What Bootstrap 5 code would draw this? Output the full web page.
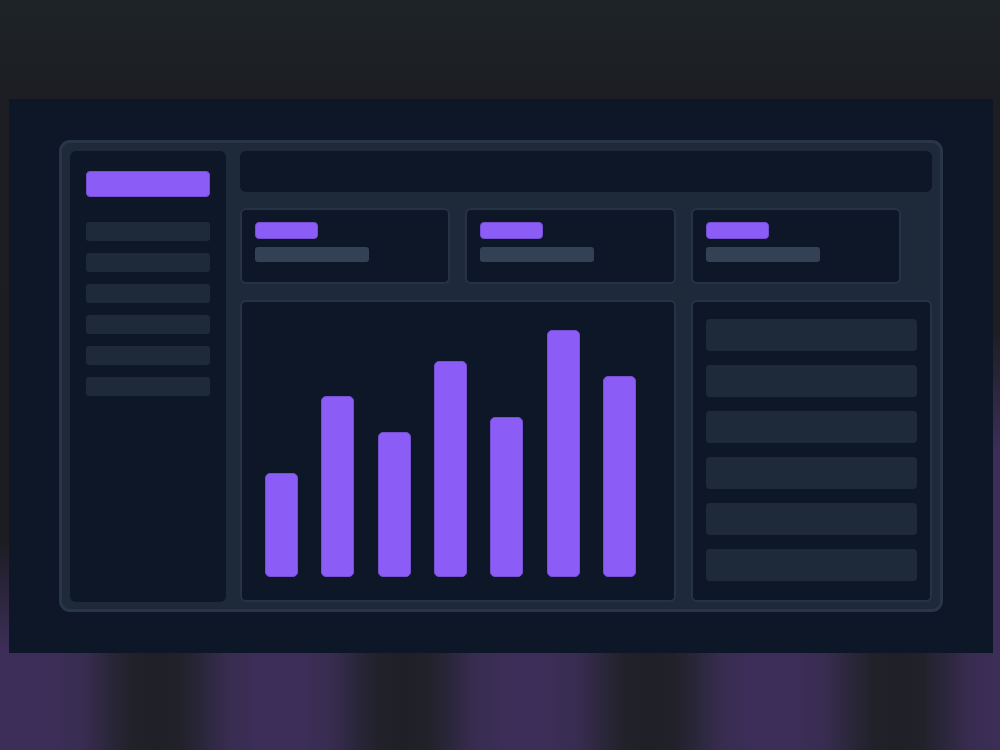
<!DOCTYPE html>
<html lang="en">
<head>
<meta charset="utf-8">
<meta name="viewport" content="width=device-width, initial-scale=1">
<title>Dashboard preview</title>
<link href="https://cdn.jsdelivr.net/npm/bootstrap@5.3.0/dist/css/bootstrap.min.css" rel="stylesheet">
<style>
  :root { --ink: #0e1728; --panel: #1e293a; --line: #263345; --muted: #334155; --accent: #8b5cf6; --accent-edge: #7650d0; }
  body { background: #1d1e23; font-family: "Liberation Sans", sans-serif; }
  .stage {
    min-height: 100vh;
    padding: 99px 7px 97px 9px;
    background:
      linear-gradient(#1c1e22 0, #1c1e22 210px, #3c2e58 330px, #3c2e58 100%) right 120px / 7px 534px no-repeat,
      linear-gradient(#1e2327 0, #1c1e23 90px, #1c1d22 540px, transparent 650px),
      repeating-linear-gradient(90deg, #3c2e58 0, #3c2e58 20px, #382c50 50px, #2a263a 76px, #212129 98px, #1f1f27 122px, #212129 146px, #2a263a 168px, #382c50 194px, #3c2e58 224px, #3c2e58 247px) 34px 0;
  }
  .mockup { background: var(--ink); padding: 41px 50px; }
  .frame { background: var(--panel); border: 3px solid #293648; border-radius: 11px; padding: 8px 8px 7px; gap: 14px; }
  .side { background: var(--ink); border-radius: 6px; width: 156px; padding: 20px 16px; flex: none; }
  .logo-block { height: 26px; background: var(--accent); border: 1px solid var(--accent-edge); border-radius: 4px; margin-bottom: 25px; }
  .menu-item { height: 19px; background: var(--panel); border-radius: 3px; }
  .menu-list { gap: 12px; }
  .content { gap: 16px; }
  .topbar { height: 41px; background: var(--ink); border-radius: 6px; }
  .tile { background: var(--ink); border: 2px solid var(--line); border-radius: 6px; }
  .stats { gap: 15px; padding-right: 31px; }
  .stat { height: 76px; padding: 12px 13px; }
  .stat-value { width: 63px; height: 17px; background: var(--accent); border: 1px solid var(--accent-edge); border-radius: 4px; margin-bottom: 8px; }
  .stat-label { width: 114px; height: 15px; background: var(--muted); border-radius: 3px; }
  .panels { gap: 15px; }
  .chart { padding: 28px 38px 23px 23px; }
  .bar { width: 33px; background: var(--accent); border: 1px solid var(--accent-edge); border-radius: 5px; }
  .feed { width: 241px; padding: 17px 13px; gap: 14px; flex: none; }
  .feed-row { height: 32px; background: var(--panel); border-radius: 4px; }
</style>
</head>
<body>
<div class="stage d-flex flex-column">
  <main class="mockup flex-grow-1 d-flex">
    <div class="frame d-flex flex-grow-1">
      <nav class="side" aria-label="Sidebar">
        <div class="logo-block"></div>
        <div class="menu-list d-flex flex-column">
          <div class="menu-item"></div><div class="menu-item"></div><div class="menu-item"></div>
          <div class="menu-item"></div><div class="menu-item"></div><div class="menu-item"></div>
        </div>
      </nav>
      <div class="content d-flex flex-column flex-grow-1">
        <header class="topbar"></header>
        <section class="stats d-flex">
          <div class="tile stat flex-fill"><div class="stat-value"></div><div class="stat-label"></div></div>
          <div class="tile stat flex-fill"><div class="stat-value"></div><div class="stat-label"></div></div>
          <div class="tile stat flex-fill"><div class="stat-value"></div><div class="stat-label"></div></div>
        </section>
        <section class="panels d-flex flex-grow-1">
          <div class="tile chart flex-grow-1 d-flex align-items-end justify-content-between">
            <div class="bar" style="height:104px"></div>
            <div class="bar" style="height:181px"></div>
            <div class="bar" style="height:145px"></div>
            <div class="bar" style="height:216px"></div>
            <div class="bar" style="height:160px"></div>
            <div class="bar" style="height:247px"></div>
            <div class="bar" style="height:201px"></div>
          </div>
          <div class="tile feed d-flex flex-column">
            <div class="feed-row"></div><div class="feed-row"></div><div class="feed-row"></div>
            <div class="feed-row"></div><div class="feed-row"></div><div class="feed-row"></div>
          </div>
        </section>
      </div>
    </div>
  </main>
</div>
<script src="https://cdn.jsdelivr.net/npm/bootstrap@5.3.0/dist/js/bootstrap.bundle.min.js"></script>
</body>
</html>
